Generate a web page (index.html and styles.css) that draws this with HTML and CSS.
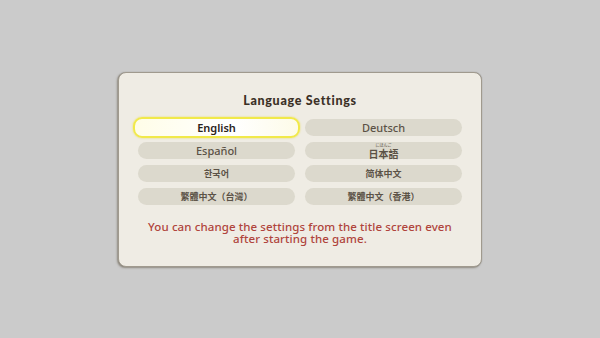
FILE: index.html
```html
<!DOCTYPE html>
<html lang="en">
<head>
<meta charset="utf-8">
<title>Language Settings</title>
<link rel="stylesheet" href="styles.css">
</head>
<body>
<div class="screen">
  <div class="dialog">
    <h1 class="title">Language Settings</h1>
    <div class="grid">
      <div class="btn selected">English</div>
      <div class="btn">Deutsch</div>
      <div class="btn">Español</div>
      <div class="btn cjk"><span class="jp"><span class="furi">にほんご</span><span class="kanji">日本語</span></span></div>
      <div class="btn cjk">한국어</div>
      <div class="btn cjk">简体中文</div>
      <div class="btn cjk">繁體中文（台灣）</div>
      <div class="btn cjk">繁體中文（香港）</div>
    </div>
    <p class="note"><span class="line">You can change the settings from the title screen even</span><span class="line">after starting the game.</span></p>
  </div>
</div>
</body>
</html>
```
FILE: styles.css
```css
html, body {
  margin: 0;
  padding: 0;
}
body {
  background: #cbcbcb;
  font-family: "Noto Sans", "Noto Sans CJK SC", sans-serif;
}
.screen {
  width: 600px;
  height: 338px;
  display: flex;
  align-items: center;
  justify-content: center;
}
.dialog {
  box-sizing: border-box;
  width: 364px;
  height: 195px;
  background: #efece4;
  border: 1px solid #a09a8e;
  border-radius: 8px;
  box-shadow: -1px 1px 2px rgba(90, 80, 60, 0.5), 0 0 1px rgba(0,0,0,0.25);
  padding: 21px 19px 0;
  display: flex;
  flex-direction: column;
  align-items: center;
}
.title {
  margin: 0;
  font-family: "Lato", "Noto Sans", sans-serif;
  font-weight: 900;
  font-size: 12.5px;
  line-height: 14px;
  letter-spacing: 0.7px;
  color: #3b3026;
}
.grid {
  margin-top: 11px;
  width: 324px;
  display: grid;
  grid-template-columns: 157px 157px;
  column-gap: 10px;
  row-gap: 6px;
}
.btn {
  height: 17px;
  border-radius: 9px;
  background: #dcd9cd;
  color: #5b5246;
  font-size: 11px;
  line-height: 17px;
  text-align: center;
  font-weight: 500;
}
.btn.cjk {
  font-size: 9px;
  font-weight: 700;
  font-family: "Noto Sans CJK SC", "Noto Sans CJK KR", sans-serif;
}
.jp {
  display: inline-flex;
  flex-direction: column;
  align-items: center;
  vertical-align: top;
}
.furi {
  font-size: 4px;
  line-height: 6px;
  font-weight: 400;
}
.kanji {
  font-size: 10px;
  line-height: 11px;
}
.btn.selected {
  margin: -2px -5px;
  height: 17px;
  border: 2px solid #f1e94a;
  box-shadow: 0 0 2px #e9dd5a;
  background: linear-gradient(90deg, #fffde8, #ffffff 60%, #fdfbe8);
  color: #2a241c;
  font-weight: 600;
}
.note {
  margin: 16px 0 0;
  text-align: center;
  font-family: "Noto Sans", sans-serif;
  font-size: 11.5px;
  line-height: 12.5px;
  font-weight: 500;
  color: #b0443c;
  letter-spacing: 0.1px;
  display: flex;
  flex-direction: column;
  align-items: center;
}
.line {
  display: block;
}
```
